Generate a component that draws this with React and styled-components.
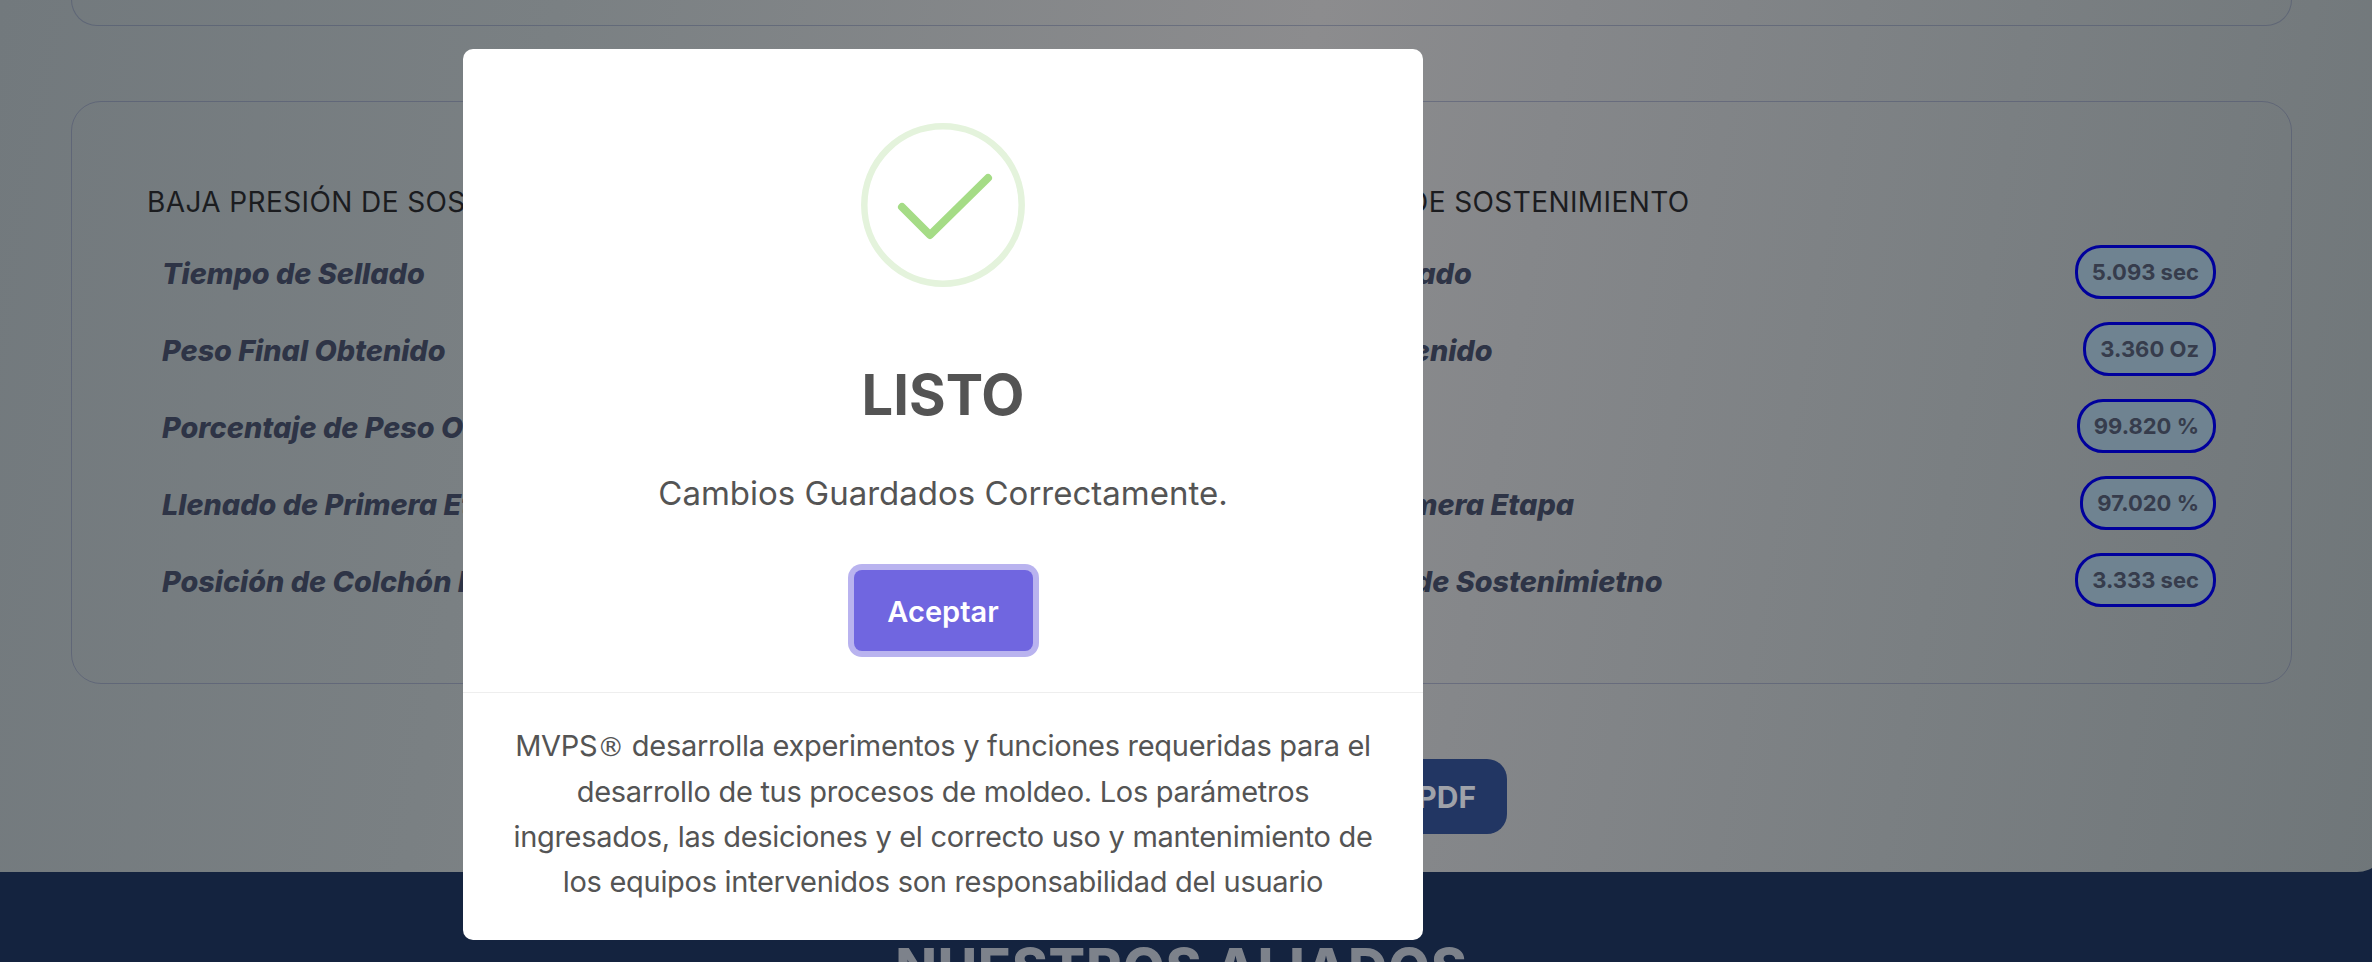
import React from "react";
import styled, { createGlobalStyle } from "styled-components";

const Global = createGlobalStyle`
  html, body { margin: 0; padding: 0; }
  body { font-family: Inter, "Open Sans", "Liberation Sans", sans-serif; }
  * { box-sizing: border-box; }
`;
const Viewport = styled.div`
  position: relative; width: 2372px; height: 962px; overflow: hidden; background: #14233f;
`;
const Upper = styled.section`
  width: 2387px; height: 872px; margin-right: -15px;
  border-bottom-right-radius: 30px;
  background: linear-gradient(100deg, #72797d 0%, #7a8083 22%, #8c8c8e 52%, #85878a 62%, #7a7f82 80%, #6f7679 100%);
  padding: 0 95px 0 71px;
  display: flex; flex-direction: column;
`;
const TopCard = styled.div`
  height: 26px; border: 1px solid rgba(70,78,110,.45); border-top: 0;
  border-radius: 0 0 30px 30px;
`;
const ResultCard = styled.div`
  margin-top: 75px; height: 583px; border: 1px solid rgba(70,78,110,.45); border-radius: 30px;
  padding: 81px 75px 0;
  display: grid; grid-template-columns: 1fr 1fr; column-gap: 25px;
`;
const ColumnTitle = styled.h3`
  margin: 0 0 24px; font-size: 28px; font-weight: 400; line-height: 38px; color: #1b1c1f; white-space: nowrap;
  letter-spacing: 0.4px;
`;
const Row = styled.div`
  height: 54px; margin-bottom: 23px; padding-left: 15px;
  display: flex; align-items: center; justify-content: space-between;
`;
const Label = styled.span`
  font-size: 28.8px; font-weight: 800; font-style: italic; color: #2e3446; white-space: nowrap; padding-top: 2px;
`;
const Pill = styled.span`
  height: 54px; padding: 0 14px; display: flex; align-items: center;
  border: 3px solid #00009c; border-radius: 26px; background: #6f8391;
  font-size: 22px; font-weight: 700; color: #363c4c; white-space: nowrap;
`;
const Actions = styled.div`
  margin-top: 75px; display: flex; justify-content: center;
`;
const PdfButton = styled.div`
  width: 651px; height: 75px; border-radius: 20px; background: #223663; color: #9fa2a9;
  font-size: 30px; font-weight: 700; display: flex; align-items: center; justify-content: flex-end; padding-right: 31px;
`;
const Partners = styled.h2`
  margin: 0; padding: 66px 9px 0 0; text-align: center; font-size: 54px; line-height: 60px; font-weight: 800;
  color: #7d828b; white-space: nowrap; letter-spacing: 1px;
`;
const Modal = styled.div`
  position: absolute; left: 463px; top: 49px; width: 960px; height: 891px;
  background: #fff; border-radius: 10px; padding-top: 74px;
  display: flex; flex-direction: column; align-items: center; color: #545454;
`;
const Title = styled.h2`
  margin: 75px 0 0; font-size: 56px; line-height: 66px; font-weight: 700; color: #545454;
`;
const Message = styled.p`
  margin: 44px 0 0; font-size: 33px; line-height: 42px; font-weight: 400;
`;
const Accept = styled.button`
  margin-top: 56px; width: 179px; height: 81px; border: 0; border-radius: 8px; padding: 2px 0 0;
  background: #7066e0; color: #fff; font: 600 29px Inter, sans-serif;
  box-shadow: 0 0 0 6px #b9b3ef;
`;
const ModalFooter = styled.div`
  margin-top: 41px; align-self: stretch; border-top: 1px solid #eee; padding: 30px 46px 0;
  text-align: center; font-size: 29px; line-height: 45px; letter-spacing: -0.3px;
`;
const Registered = styled.span`
  font-family: "DejaVu Sans", sans-serif; font-size: 27px;
`;

const Check = () => (
  <svg width="164" height="164" viewBox="0 0 164 164" fill="none">
    <circle cx="82" cy="82" r="78.7" stroke="#e4f3dc" strokeWidth="6.5" />
    <path d="M41 84 L69 112 L127 55" stroke="#a5dc86" strokeWidth="8" strokeLinecap="round" strokeLinejoin="round" />
  </svg>
);

const columns = [
  {
    rows: [
      ["Tiempo de Sellado", "5.093 sec"],
      ["Peso Final Obtenido", "3.360 Oz"],
      ["Porcentaje de Peso Obtenido", "99.820 %"],
      ["Llenado de Primera Etapa", "97.020 %"],
      ["Posición de Colchón Final", "3.333 sec"],
    ],
  },
  {
    rows: [
      ["Tiempo de Sellado", "5.093 sec"],
      ["Peso Final Obtenido", "3.360 Oz"],
      ["Porcentaje", "99.820 %"],
      ["Llenado de Primera Etapa", "97.020 %"],
      ["Posición Final de Sostenimietno", "3.333 sec"],
    ],
  },
];

export default function App() {
  return (
    <Viewport>
      <Global />
      <Upper>
        <TopCard />
        <ResultCard>
          {columns.map((c, i) => (
            <div key={i}>
              <ColumnTitle>BAJA PRESIÓN DE SOSTENIMIENTO</ColumnTitle>
              {c.rows.map(([l, v]) => (
                <Row key={l}>
                  <Label>{l}</Label>
                  <Pill>{v}</Pill>
                </Row>
              ))}
            </div>
          ))}
        </ResultCard>
        <Actions><PdfButton>Descargar Reporte PDF</PdfButton></Actions>
      </Upper>
      <Partners>NUESTROS ALIADOS</Partners>
      <Modal>
        <Check />
        <Title>LISTO</Title>
        <Message>Cambios Guardados Correctamente.</Message>
        <Accept>Aceptar</Accept>
        <ModalFooter>
          MVPS<Registered>®</Registered> desarrolla experimentos y funciones requeridas para el desarrollo de tus procesos de moldeo. Los parámetros ingresados, las desiciones y el correcto uso y mantenimiento de los equipos intervenidos son responsabilidad del usuario
        </ModalFooter>
      </Modal>
    </Viewport>
  );
}
